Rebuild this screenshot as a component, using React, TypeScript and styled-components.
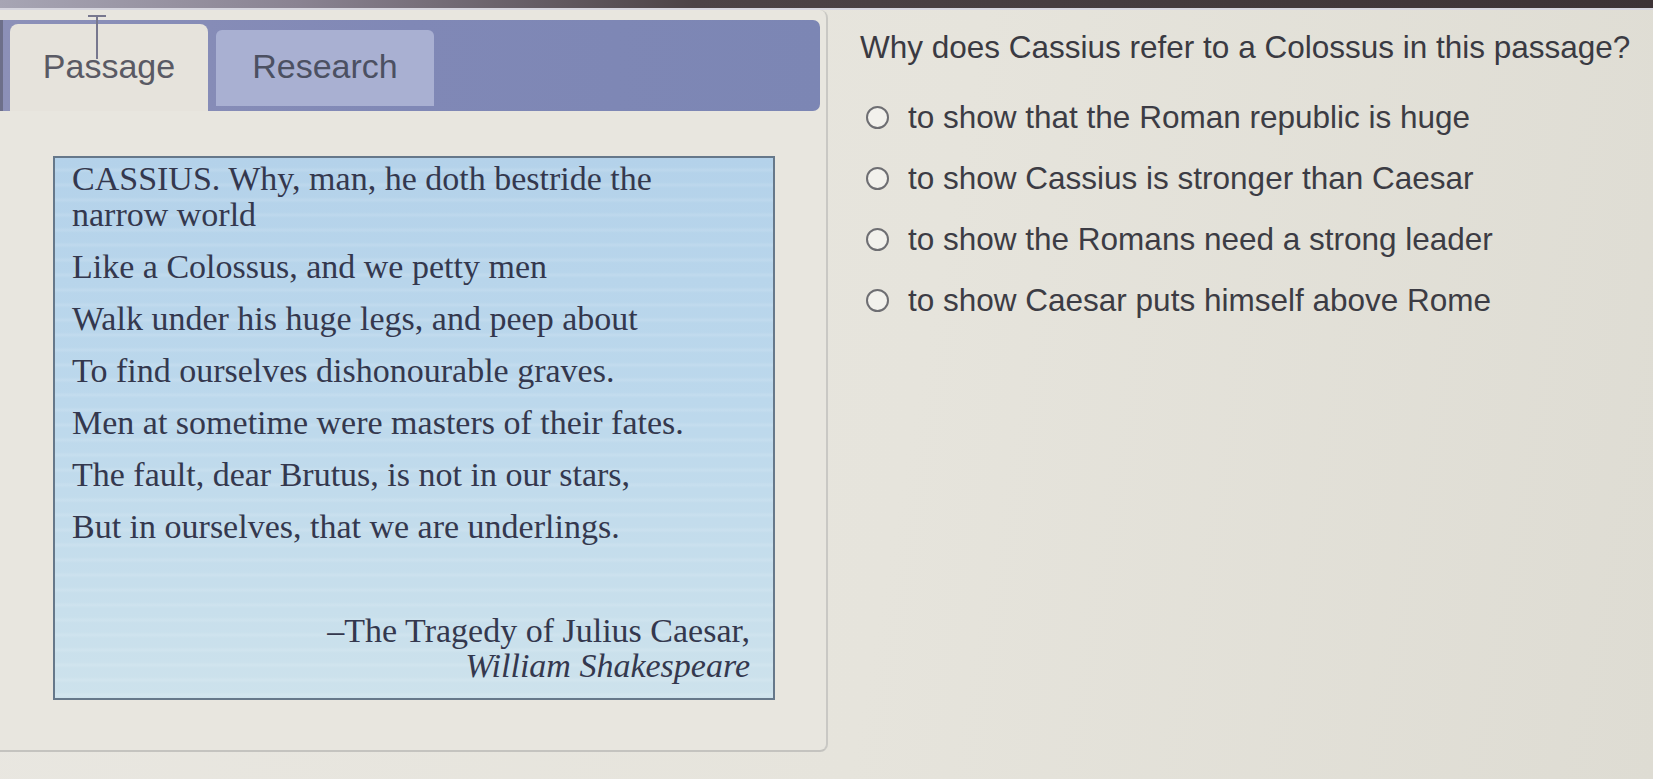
import styled, { createGlobalStyle } from 'styled-components'

const GlobalStyle = createGlobalStyle`
	html, body {
		margin: 0;
		padding: 0;
		width: 1653px;
		height: 779px;
		overflow: hidden;
		background: linear-gradient(100deg, #e9e7e1 0%, #e6e4dc 55%, #dedcd3 100%);
	}
	* {
		box-sizing: border-box;
	}
`

const lines = [
	'Like a Colossus, and we petty men',
	'Walk under his huge legs, and peep about',
	'To find ourselves dishonourable graves.',
	'Men at sometime were masters of their fates.',
	'The fault, dear Brutus, is not in our stars,',
	'But in ourselves, that we are underlings.',
]

const options = [
	'to show that the Roman republic is huge',
	'to show Cassius is stronger than Caesar',
	'to show the Romans need a strong leader',
	'to show Caesar puts himself above Rome',
]

export default function App() {
	return (
		<Page>
			<GlobalStyle />
			<TopStrip />
			<Content>
				<LeftPanel>
					<TabBar>
						<Tab $active>Passage</Tab>
						<Tab>Research</Tab>
					</TabBar>
					<PassageBox>
						<Verse>
							CASSIUS. Why, man, he doth bestride the
							<br />
							narrow world
						</Verse>
						{lines.map((line) => (
							<Verse key={line}>{line}</Verse>
						))}
						<Attribution>
							–The Tragedy of Julius Caesar,
							<br />
							<em>William Shakespeare</em>
						</Attribution>
					</PassageBox>
				</LeftPanel>
				<QuestionPane>
					<Question>Why does Cassius refer to a Colossus in this passage?</Question>
					<OptionList>
						{options.map((opt) => (
							<OptionRow key={opt}>
								<Radio />
								<OptionText>{opt}</OptionText>
							</OptionRow>
						))}
					</OptionList>
				</QuestionPane>
			</Content>
			<Cursor />
		</Page>
	)
}

const Page = styled.div`
	position: relative;
	width: 1653px;
	height: 779px;
	display: flex;
	flex-direction: column;
`
const TopStrip = styled.div`
	height: 10px;
	flex-shrink: 0;
	background: linear-gradient(90deg, #a7a5b4 0%, #8a8392 18%, #4d4346 42%, #3d3336 100%);
	border-bottom: 2px solid #d6d5de;
`
const Content = styled.div`
	display: flex;
	align-items: flex-start;
`
const LeftPanel = styled.div`
	width: 828px;
	height: 742px;
	background: #e8e6df;
	border-right: 2px solid #c9c8c4;
	border-bottom: 2px solid #c4c3bf;
	border-top-right-radius: 8px;
	border-bottom-right-radius: 8px;
	display: flex;
	flex-direction: column;
`
const TabBar = styled.div`
	margin-top: 10px;
	width: 820px;
	height: 91px;
	background: linear-gradient(90deg, #8c90b8 0%, #8088b6 50%, #7c86b4 100%);
	border-top-right-radius: 7px;
	border-bottom-right-radius: 7px;
	display: flex;
	align-items: flex-start;
	gap: 8px;
	padding: 4px 0 0 7px;
	border-left: 3px solid #6d6f8a;
`
const Tab = styled.div<{ $active?: boolean }>`
	width: ${(p) => (p.$active ? '198px' : '218px')};
	height: ${(p) => (p.$active ? '87px' : '76px')};
	margin-top: ${(p) => (p.$active ? '0' : '6px')};
	padding-top: ${(p) => (p.$active ? '25px' : '19px')};
	background: ${(p) => (p.$active ? '#e6e3dc' : '#a9b0d2')};
	border-radius: ${(p) => (p.$active ? '8px 8px 0 0' : '6px 6px 0 0')};
	color: ${(p) => (p.$active ? '#5a5a64' : '#4c5062')};
	font-family: 'Liberation Sans', Arial, sans-serif;
	font-size: 34px;
	line-height: 34px;
	text-align: center;
`
const PassageBox = styled.div`
	margin: 45px 0 0 53px;
	width: 722px;
	height: 544px;
	border: 2px solid #66788a;
	padding: 3px 23px 0 17px;
	background:
		repeating-linear-gradient(180deg, rgba(255, 255, 255, 0) 0px, rgba(255, 255, 255, 0) 9px, rgba(255, 255, 255, 0.12) 12px, rgba(255, 255, 255, 0) 15px),
		linear-gradient(180deg, #b4d2ea 0%, #bcd8ec 45%, #cde2ec 100%);
	display: flex;
	flex-direction: column;
	gap: 16px;
	font-family: 'Liberation Serif', 'Times New Roman', serif;
	font-size: 34px;
	color: #34384e;
`
const Verse = styled.p`
	margin: 0;
	line-height: 36px;
	white-space: nowrap;
`
const Attribution = styled.p`
	margin: 52px 0 0;
	line-height: 35px;
	text-align: right;
	em {
		font-style: italic;
	}
`
const QuestionPane = styled.div`
	padding: 19px 0 0 32px;
	font-family: 'Liberation Sans', Arial, sans-serif;
	color: #3a3a42;
`
const Question = styled.div`
	font-size: 31.5px;
	line-height: 36px;
	white-space: nowrap;
`
const OptionList = styled.div`
	margin-top: 22px;
	display: flex;
	flex-direction: column;
`
const OptionRow = styled.div`
	height: 61px;
	display: flex;
	align-items: center;
	gap: 19px;
	padding-left: 6px;
`
const Radio = styled.span`
	width: 23px;
	height: 23px;
	flex-shrink: 0;
	border-radius: 50%;
	border: 2px solid #6e6e72;
	background: #f2f1ec;
`
const OptionText = styled.span`
	font-size: 31.5px;
	line-height: 61px;
	white-space: nowrap;
	color: #3c3c44;
`
const Cursor = styled.div`
	position: absolute;
	left: 96px;
	top: 15px;
	width: 2px;
	height: 44px;
	background: #77778e;
	&::before {
		content: '';
		position: absolute;
		left: -8px;
		top: 0;
		width: 18px;
		height: 2px;
		background: #77778e;
	}
`
